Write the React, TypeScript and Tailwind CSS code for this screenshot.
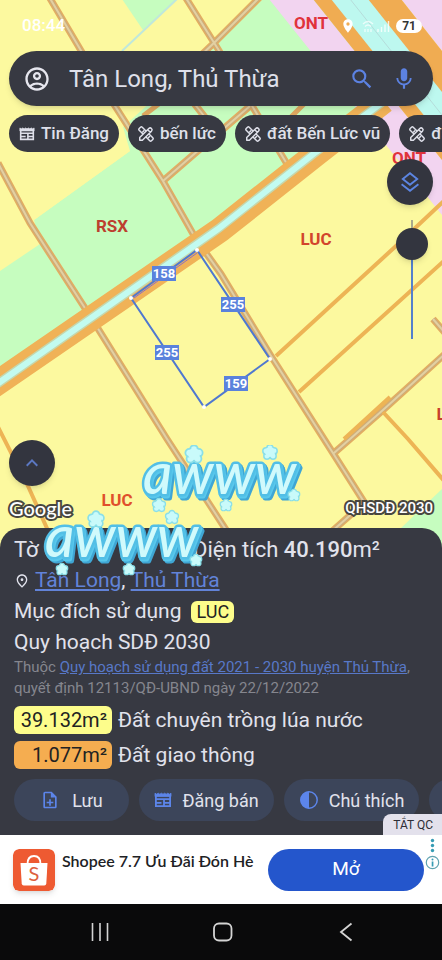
import { useState } from "react";
import type { ReactNode } from "react";
import {
  MdOutlineAccountCircle,
  MdSearch,
  MdMic,
  MdLocationOn,
  MdOutlinePlace,
  MdOutlineNoteAdd,
  MdKeyboardArrowUp,
} from "react-icons/md";

interface Chip {
  id: number;
  label: string;
  icon: ReactNode;
}

interface LandUse {
  id: number;
  area: string;
  name: string;
  color: string;
}

function ListingIcon({ className }: { className?: string }) {
  return (
    <svg
      className={className}
      viewBox="0 0 18 16"
      fill="none"
      stroke="currentColor"
      strokeWidth="1.8"
      aria-hidden="true"
    >
      <path d="M1 1.2l1.6 1 1.6-1 1.6 1 1.6-1 1.6 1 1.6-1 1.6 1 1.6-1 1.6 1 1.6-1V4.5H1z" fill="currentColor" strokeWidth="0.8" />
      <path d="M1.9 3v11.1h14.2V3M2 7.2h14M10 7.5v6.5M2 10.8h5.5M10 10.8h6" />
    </svg>
  );
}

// Ruler with a pencil lying across it
function MeasureIcon({ className }: { className?: string }) {
  return (
    <svg
      className={className}
      viewBox="0 0 24 24"
      fill="#373942"
      stroke="currentColor"
      strokeWidth="2.2"
      strokeLinejoin="round"
      strokeLinecap="round"
      aria-hidden="true"
    >
      <rect x="8.8" y="-1" width="6.4" height="26" rx="1.8" transform="rotate(-45 12 12)" />
      <path d="M7 9l1.8-1.8M15.5 17.5l1.8-1.8" />
      <path d="M2.6 21.4v-4L16.2 3.8a2.8 2.8 0 014 4L6.6 21.4zM14.5 5.5l4 4" />
    </svg>
  );
}

function LayersIcon() {
  return (
    <svg
      className="size-6"
      viewBox="0 0 24 24"
      fill="none"
      stroke="currentColor"
      strokeWidth="1.9"
      aria-hidden="true"
    >
      <path d="M12 3.2l7.2 5.8-7.2 5.8L4.8 9z" />
      <path d="M3.6 14.2l8.4 6.6 8.4-6.6" />
    </svg>
  );
}

function ContrastIcon({ className }: { className?: string }) {
  return (
    <svg className={className} viewBox="0 0 20 20" aria-hidden="true">
      <circle cx="10" cy="10" r="8.2" fill="none" stroke="currentColor" strokeWidth="1.5" />
      <path d="M10 1.5a8.5 8.5 0 000 17z" fill="currentColor" />
    </svg>
  );
}

const chips: Chip[] = [
  { id: 1, label: "Tin Đăng", icon: <ListingIcon className="h-4 w-4 shrink-0" /> },
  { id: 2, label: "bến lức", icon: <MeasureIcon className="size-4 shrink-0" /> },
  { id: 3, label: "đất Bến Lức vũ", icon: <MeasureIcon className="size-4 shrink-0" /> },
  { id: 4, label: "đất", icon: <MeasureIcon className="size-4 shrink-0" /> },
];

const landUses: LandUse[] = [
  { id: 1, area: "39.132m²", name: "Đất chuyên trồng lúa nước", color: "bg-[#fdfd8b]" },
  { id: 2, area: "1.077m²", name: "Đất giao thông", color: "bg-[#f5ad50]" },
];

const edges = [
  { x: 164, y: 275, length: 158 },
  { x: 233, y: 306, length: 255 },
  { x: 167, y: 354, length: 255 },
  { x: 236, y: 385, length: 159 },
];

const corners = [
  [131, 299],
  [197, 251],
  [270, 360],
  [204, 408],
];

const zones = [
  { x: 311, y: 30, name: "ONT", color: "#e0323c" },
  { x: 409, y: 165, name: "ONT", color: "#e0323c" },
  { x: 112, y: 233, name: "RSX", color: "#bd402e" },
  { x: 316, y: 246, name: "LUC", color: "#d2452c" },
  { x: 117, y: 507, name: "LUC", color: "#e0502c" },
  { x: 452, y: 421, name: "LUC", color: "#c8402c" },
];

const tracks =
  "M48-4L83 55L115 107L163 182L196 240L221 275L271 357L324 440L366 506M184-4L218 50L287 165M-2 164L30 224L92 320L167 440L232 540M163 182L200 150L250 107M262-4L216 42L195 62M334 454L350 440L383 411L446 354M330 534L364 504M433 320L446 335M193 103L208 122";

function MapCanvas() {
  return (
    <svg
      className="absolute inset-0 h-full w-full"
      viewBox="0 0 442 550"
      preserveAspectRatio="xMidYMid slice"
      role="img"
      aria-label="QHSDĐ 2030"
    >
      <rect width="442" height="550" fill="#fcf99f" />
      <path d="M0 272L40 245L34 221L130 152L110 140L165 90L215 45L263 0H340L400 110L0 384z" fill="#c6fdbf" />
      <path d="M115 100L130 152L34 221L100 130z" fill="#fcf99f" />
      <path d="M122 0H177L143 31z" fill="#c6fdbf" />
      <path d="M400 530L442 490V550H380z" fill="#c6fdbf" />
      <path d="M177 0L122 52" stroke="#bfe8dc" strokeWidth="2" />
      <path d="M269 0H313L442 161V216z" fill="#f2d4f0" />
      <path d="M401 0H442V52z" fill="#f2d4f0" />
      <path d="M143 117L160 104M291 118L305 104" stroke="#dfa860" strokeWidth="5" />

      {/* minor tracks */}
      <g fill="none">
        <path d={tracks} stroke="#e2ad62" strokeWidth="7" />
        <path d={tracks} stroke="#cbad7c" strokeWidth="4" />
        <path d={tracks} stroke="#e3d0a2" strokeWidth="2" />
        <path d="M276 357L396 247L446 200M299 393L446 260M383 413L408 440L446 484M344 440L390 398M-2 428L28 487L50 536" stroke="#edb455" strokeWidth="4" />
      </g>

      {/* canal road */}
      <path d="M-10 389L220 231L316 155L384 102" stroke="#f0b257" strokeWidth="25" fill="none" />
      <path d="M-10 390L218 230L316 153L384 102" stroke="#c5d7ad" strokeWidth="9" fill="none" />
      <path d="M-10 390L218 230L316 153L384 102" stroke="#c2fbf0" strokeWidth="6" fill="none" />
      <path d="M313 0H401L442 52V161z" fill="#f0ac52" />
      <path d="M331 0H368L442 93V139z" fill="#bdf8ef" />
      <path d="M350 0L442 116" stroke="#b5dcda" strokeWidth="1" />

      {zones.map((zone) => (
        <text
          key={`${zone.name}-${zone.x}`}
          x={zone.x}
          y={zone.y}
          textAnchor="middle"
          fill={zone.color}
          className="font-['Roboto',sans-serif] text-[17px] font-bold"
        >
          {zone.name}
        </text>
      ))}

      {/* selected parcel */}
      <path d="M131 299L197 251L270 360L204 408z" fill="none" stroke="#4f78d0" strokeWidth="2" />
      <path d="M134 299L197 254" stroke="#8f6fc0" strokeWidth="1" />
      {corners.map(([x, y]) => (
        <circle key={x} cx={x} cy={y} r="2" fill="#fff" />
      ))}
      {edges.map((edge) => (
        <g key={`${edge.x}-${edge.y}`}>
          <rect x={edge.x - 12} y={edge.y - 8} width="24" height="15" fill="#5a82dc" />
          <text
            x={edge.x}
            y={edge.y + 4}
            textAnchor="middle"
            fill="#fff"
            className="font-['Roboto',sans-serif] text-[13px] font-bold"
          >
            {edge.length}
          </text>
        </g>
      ))}
    </svg>
  );
}

function Flower({ x, y, size }: { x: number; y: number; size: number }) {
  return (
    <g transform={`translate(${x} ${y}) scale(${size})`}>
      <g stroke="#8adfe8" strokeWidth="1.5" fill="#c9fafa">
        <circle cx="0" cy="-4" r="3.2" />
        <circle cx="4" cy="-1" r="3.2" />
        <circle cx="3" cy="4" r="3.2" />
        <circle cx="-3" cy="4" r="3.2" />
        <circle cx="-4" cy="-1" r="3.2" />
      </g>
      <circle r="5" fill="#c9fafa" />
    </g>
  );
}

function Sticker({ className, flowers }: { className: string; flowers: number[][] }) {
  return (
    <svg className={className} viewBox="0 0 170 80" aria-hidden="true">
      <text
        x="9"
        y="49"
        fill="#d0fafc"
        stroke="#52bfe6"
        strokeWidth="5"
        strokeLinejoin="round"
        paintOrder="stroke"
        className="font-['Lato',sans-serif] text-[57px] font-medium italic [filter:drop-shadow(1px_2px_0_#58c8ec)_drop-shadow(2px_2px_0_#3fa6d4)]"
      >
        awww
      </text>
      {flowers.map(([x, y, size]) => (
        <Flower key={`${x}-${y}`} x={x} y={y} size={size} />
      ))}
    </svg>
  );
}

function StatusBar() {
  return (
    <div className="flex h-[51px] items-center justify-between pr-5 pl-[22px] text-white">
      <span className="text-[17px] font-medium">08:44</span>
      <div className="flex items-center gap-1">
        <MdLocationOn className="size-4" />
        <svg className="h-4 w-8" viewBox="0 0 32 16" fill="none" stroke="#fff" strokeWidth="1.4" aria-hidden="true">
          <path d="M3 6q5-5 10 0M5 8.5q3-3 6 0M5 14v-3M8 14v-3M11 14v-3" opacity="0.7" />
          <path d="M18 14v-3M21.5 14V9M25 14V6.5M28.5 14V3" opacity="0.8" />
        </svg>
        <span className="rounded-full bg-white px-[6px] text-[12px] leading-[14px] font-bold text-[#333]">71</span>
      </div>
    </div>
  );
}

function OpacitySlider() {
  const [opacity, setOpacity] = useState(91);
  return (
    <input
      type="range"
      aria-label="QHSDĐ"
      value={opacity}
      onChange={(e) => setOpacity(Number(e.target.value))}
      className="mt-[15px] mr-[5px] h-[119px] w-8 appearance-none bg-[linear-gradient(to_top,#5480cc_80%,#a9a98c_80%)] bg-[length:2px_100%] bg-center bg-no-repeat [direction:rtl] [writing-mode:vertical-lr] [&::-webkit-slider-thumb]:size-8 [&::-webkit-slider-thumb]:appearance-none [&::-webkit-slider-thumb]:rounded-full [&::-webkit-slider-thumb]:bg-[#33353f] [&::-webkit-slider-thumb]:shadow-md"
    />
  );
}

function ParcelPanel() {
  return (
    <section className="relative -mt-5 rounded-t-[20px] bg-[#373942] pt-[6px] pb-[14px] text-[#e1e2ec]">
      <div className="px-[14px] text-[21px]">
        <h1 className="flex text-[22px] leading-[31px]">
          <span className="w-[179px]">Tờ</span>
          <span>
            Diện tích <b className="font-medium">40.190</b>m²
          </span>
        </h1>
        <p className="flex items-center leading-[31px]">
          <MdOutlinePlace className="mr-[5px] size-4" />
          <a href="#tan-long" className="text-[#6283d8] underline underline-offset-2">Tân Long</a>,&nbsp;
          <a href="#thu-thua" className="text-[#6283d8] underline underline-offset-2">Thủ Thừa</a>
        </p>
        <p className="flex items-center gap-[10px] leading-[31px]">
          Mục đích sử dụng
          <span className="rounded-md bg-[#fdfd8b] px-[5px] text-[18px] leading-[22px] text-[#222]">LUC</span>
        </p>
        <p className="leading-[30px]">Quy hoạch SDĐ 2030</p>
        <p className="text-[15px] leading-[21px] text-[#85868e]">
          Thuộc{" "}
          <a href="#quy-hoach" className="text-[#5878c8] underline">
            Quy hoạch sử dụng đất 2021 - 2030 huyện Thủ Thừa
          </a>
          , quyết định 12113/QĐ-UBND ngày 22/12/2022
        </p>
        <ul className="mt-[7px] flex flex-col gap-[7px]">
          {landUses.map((use) => (
            <li key={use.id} className="flex items-center gap-[6px] leading-7">
              <span className={`w-[98px] rounded-md pr-[5px] text-right text-[20px] text-[#222] ${use.color}`}>
                {use.area}
              </span>
              {use.name}
            </li>
          ))}
        </ul>
      </div>
      <div className="mt-[10px] flex gap-[10px] overflow-hidden pl-[14px] text-[18px] [&>button]:flex [&>button]:h-[42px] [&>button]:shrink-0 [&>button]:items-center [&>button]:justify-center [&>button]:rounded-full [&>button]:bg-[#3c455a]">
        <button type="button" className="w-[115px] gap-3">
          <MdOutlineNoteAdd className="size-5 text-[#5c85ea]" />
          Lưu
        </button>
        <button type="button" className="w-[135px] gap-[10px]">
          <ListingIcon className="h-4 w-[18px] text-[#5c85ea]" />
          Đăng bán
        </button>
        <button type="button" className="w-[135px] gap-[10px]">
          <ContrastIcon className="size-5 text-[#5c85ea]" />
          Chú thích
        </button>
        <button type="button" aria-label="Thêm" className="w-[115px]">
          <svg className="mr-auto ml-3 size-4 text-[#5c85ea]" viewBox="0 0 16 16" aria-hidden="true">
            <path d="M1 3h14L8 11z" fill="currentColor" />
          </svg>
        </button>
      </div>
      <Sticker
        className="pointer-events-none absolute -top-5 left-[36px] h-20 w-[170px]"
        flowers={[
          [60, 11, 1.1],
          [26, 61, 0.8],
          [93, 61, 0.8],
          [160, 52, 0.8],
        ]}
      />
      <button
        type="button"
        className="absolute right-0 bottom-0 h-[21px] rounded-tl-lg bg-[#e3e1ec] pr-[9px] pl-[10px] text-[12px] text-[#2e2e36]"
      >
        TẮT QC
      </button>
    </section>
  );
}

function AdBanner() {
  return (
    <aside className="flex h-[69px] items-center bg-white pr-[2px] pl-[13px]">
      <svg className="size-[42px] shrink-0 rounded-md shadow-md" viewBox="0 0 42 42" aria-hidden="true">
        <rect width="42" height="42" rx="6" fill="#ee5a32" />
        <path d="M14.5 15c0-5 2.5-8 6.5-8s6.5 3 6.5 8" fill="none" stroke="#fff" strokeWidth="1.8" />
        <path d="M7.5 14h27l-1.2 20.5q-.2 2-2 2H10.7q-1.8 0-2-2z" fill="#fff" />
        <text x="21" y="32" textAnchor="middle" fill="#dd6040" className="font-['Lato',sans-serif] text-[20px]">S</text>
      </svg>
      <p className="ml-[7px] self-start pt-[14px] font-['Lato',sans-serif] text-[16px] leading-6 font-semibold whitespace-nowrap text-[#202124]">
        Shopee 7.7 Ưu Đãi Đón Hè
      </p>
      <button
        type="button"
        className="ml-auto h-[42px] w-[156px] rounded-full bg-[#2456cc] text-[19px] text-white"
      >
        Mở
      </button>
      <svg className="ml-[1px] h-[62px] w-[15px] shrink-0 self-start" viewBox="0 0 15 62" aria-hidden="true">
        <g fill="#369cb4">
          <circle cx="7.5" cy="5.5" r="1.7" />
          <circle cx="7.5" cy="10.5" r="1.7" />
          <circle cx="7.5" cy="15.5" r="1.7" />
          <circle cx="7.5" cy="24.5" r="1" />
          <rect x="6.7" y="26.5" width="1.7" height="5" />
        </g>
        <circle cx="7.5" cy="27.5" r="6.2" fill="none" stroke="#5fa3b0" strokeWidth="1.2" />
      </svg>
    </aside>
  );
}

function NavBar() {
  return (
    <nav className="flex h-14 items-center justify-around bg-[#0a0a0b] pr-[34px] pl-[38px] text-[#d4d4d4]">
      <button type="button" aria-label="Recents">
        <svg className="size-5" viewBox="0 0 20 20" stroke="currentColor" strokeWidth="1.6">
          <path d="M2.5 1v18M10 1v18M17.5 1v18" />
        </svg>
      </button>
      <button type="button" aria-label="Home">
        <svg className="size-5" viewBox="0 0 20 20" fill="none" stroke="currentColor" strokeWidth="1.8">
          <rect x="1" y="1.5" width="17.5" height="17" rx="5" />
        </svg>
      </button>
      <button type="button" aria-label="Back">
        <svg className="size-5" viewBox="0 0 20 20" fill="none" stroke="currentColor" strokeWidth="1.8">
          <path d="M15.5 1.5L5 10l10.5 8.5" />
        </svg>
      </button>
    </nav>
  );
}

export default function App() {
  return (
    <div className="flex min-h-screen flex-col font-['Roboto',sans-serif]">
      <main className="relative flex flex-1 flex-col overflow-hidden pb-5">
        <MapCanvas />
        <div className="relative flex flex-1 flex-col">
          <StatusBar />
          <form className="mx-[9px] flex h-[55px] items-center rounded-full bg-[#373942] pr-4 pl-[14px] shadow-md">
            <MdOutlineAccountCircle className="size-7 shrink-0 text-[#e6e6ee]" />
            <input
              type="text"
              aria-label="Tìm kiếm"
              defaultValue="Tân Long, Thủ Thừa"
              className="ml-[18px] min-w-0 flex-1 bg-transparent text-[24px] text-[#dfe0ea] outline-none"
            />
            <button type="submit" aria-label="Tìm" className="mr-4 text-[#5c82e2]">
              <MdSearch className="size-[26px]" />
            </button>
            <button type="button" aria-label="Micro" className="text-[#5c82e2]">
              <MdMic className="size-[26px]" />
            </button>
          </form>
          <div className="mt-[9px] flex gap-[9px] overflow-hidden pl-[9px]">
            {chips.map((chip) => (
              <button
                key={chip.id}
                type="button"
                className="flex h-[37px] shrink-0 items-center gap-[6px] rounded-full bg-[#373942] px-[10px] text-[17px] font-medium text-[#dfe0ea]"
              >
                {chip.icon}
                {chip.label}
              </button>
            ))}
          </div>
          <div className="mt-[7px] mr-[9px] flex flex-col items-end">
            <button
              type="button"
              aria-label="Lớp bản đồ"
              className="flex size-[46px] items-center justify-center rounded-full bg-[#33353f] text-[#5c85e2] shadow-md"
            >
              <LayersIcon />
            </button>
            <OpacitySlider />
          </div>
          <div className="mt-auto flex flex-col items-start px-[9px] pb-2">
            <button
              type="button"
              aria-label="Mở rộng"
              className="flex size-[46px] items-center justify-center rounded-full bg-[#33353f] text-[#5c78c2] shadow-md"
            >
              <MdKeyboardArrowUp className="size-6" />
            </button>
            <div className="mt-[10px] flex w-full items-center justify-between leading-6 text-white [paint-order:stroke_fill] [-webkit-text-stroke:4px_#48463f]">
              <span className="font-['Lato',sans-serif] text-[20px] font-medium">Google</span>
              <span className="text-[15px] font-medium">QHSDĐ 2030</span>
            </div>
          </div>
        </div>
        <Sticker
          className="pointer-events-none absolute bottom-[23px] left-[134px] h-20 w-[170px]"
          flowers={[
            [60, 9, 1.2],
            [136, 7, 1],
            [25, 60, 0.9],
            [38, 72, 0.9],
            [92, 60, 0.8],
            [160, 50, 0.8],
          ]}
        />
      </main>
      <ParcelPanel />
      <AdBanner />
      <NavBar />
    </div>
  );
}
